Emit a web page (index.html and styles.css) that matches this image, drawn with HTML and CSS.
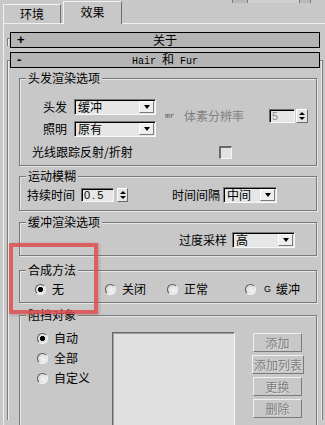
FILE: index.html
```html
<!DOCTYPE html>
<html lang="zh">
<head>
    <meta charset="UTF-8">
    <title>环境和效果</title>
    <link rel="stylesheet" href="styles.css">
</head>
<body>
    <div class="tabs">
        <div class="tab">环境</div>
        <div class="tab active">效果</div>
        <div class="top-bits"><span></span><span></span><span></span></div>
    </div>

    <div class="panel">
        <div class="rollout">
            <div class="bracket short"></div>
            <div class="bar"><span class="sign">+</span><span class="bar-title">关于</span></div>
        </div>

        <div class="rollout open">
            <div class="bracket long"></div>
            <div class="rollout-body">
                <div class="bar"><span class="sign">-</span><span class="bar-title mono">Hair <span class="cjk">和</span> Fur</span></div>

                <div class="group g-hair">
                    <div class="group-title">头发渲染选项</div>
                    <div class="hair-top">
                        <div class="hair-left">
                            <div class="field-row">
                                <span class="lbl">头发</span>
                                <div class="combo w-hair"><span class="combo-text">缓冲</span><span class="drop"></span></div>
                            </div>
                            <div class="field-row">
                                <span class="lbl">照明</span>
                                <div class="combo w-hair"><span class="combo-text">原有</span><span class="drop"></span></div>
                            </div>
                        </div>
                        <div class="voxel">
                            <span class="mr">mr</span>
                            <span class="dim">体素分辨率</span>
                            <div class="spinner">
                                <span class="spin-field w-voxel dim-num">5</span>
                                <span class="spin-arrows"><i class="up"></i><i class="down"></i></span>
                            </div>
                        </div>
                    </div>
                    <div class="ray-row">
                        <span>光线跟踪反射/折射</span>
                        <span class="check"></span>
                    </div>
                </div>

                <div class="group g-motion">
                    <div class="group-title">运动模糊</div>
                    <div class="row">
                        <span class="motion-lbl">持续时间</span>
                        <div class="spinner">
                            <span class="spin-field w-dur">0.5</span>
                            <span class="spin-arrows gap"><i class="up"></i><i class="down"></i></span>
                        </div>
                        <span class="interval-lbl">时间间隔</span>
                        <div class="combo w-interval"><span class="combo-text">中间</span><span class="drop"></span></div>
                    </div>
                </div>

                <div class="group g-buffer">
                    <div class="group-title">缓冲渲染选项</div>
                    <div class="row">
                        <span class="over-lbl">过度采样</span>
                        <div class="combo w-over"><span class="combo-text">高</span><span class="drop"></span></div>
                    </div>
                </div>

                <div class="group g-comp">
                    <div class="group-title">合成方法</div>
                    <div class="radio-row">
                        <label class="radio-item"><span class="radio on"></span>无</label>
                        <label class="radio-item"><span class="radio"></span>关闭</label>
                        <label class="radio-item"><span class="radio"></span>正常</label>
                        <label class="radio-item"><span class="radio"></span><span class="g">G</span>缓冲</label>
                    </div>
                </div>

                <div class="group g-occl">
                    <div class="group-title">阻挡对象</div>
                    <div class="occl-body">
                        <div class="radio-col">
                            <label class="radio-item"><span class="radio on"></span>自动</label>
                            <label class="radio-item"><span class="radio"></span>全部</label>
                            <label class="radio-item"><span class="radio"></span>自定义</label>
                        </div>
                        <div class="list-box"></div>
                        <div class="btn-col">
                            <button class="btn w-btn" disabled>添加</button>
                            <button class="btn" disabled>添加列表</button>
                            <button class="btn w-btn" disabled>更换</button>
                            <button class="btn w-btn" disabled>删除</button>
                        </div>
                    </div>
                </div>
            </div>
            <div class="bracket long right"></div>
        </div>
    </div>

    <div class="highlight"></div>
</body>
</html>
```

FILE: styles.css
```css
* {
    margin: 0;
    padding: 0;
    box-sizing: border-box;
}

body {
    width: 325px;
    height: 425px;
    overflow: hidden;
    position: relative;
    background: #c8c8c8;
    font-family: "Noto Sans CJK SC", "Liberation Sans", sans-serif;
    font-size: 12px;
    line-height: 14px;
    color: #000;
}

/* tabs */
.tabs {
    display: flex;
    align-items: flex-end;
    height: 23px;
    padding-left: 3px;
    gap: 2px;
}

.tab {
    width: 58px;
    height: 19px;
    display: flex;
    align-items: center;
    justify-content: center;
    border: 1px solid #f2f2f2;
    border-right-color: #6e6e6e;
    border-bottom: none;
    background: #c8c8c8;
}

.tab.active {
    width: 59px;
    height: 23px;
    margin-bottom: -1px;
    padding-bottom: 2px;
    position: relative;
    z-index: 1;
}

.top-bits {
    display: flex;
    align-self: flex-start;
    margin-left: 108px;
    height: 3px;
}

.top-bits span {
    height: 3px;
    border-left: 1px solid #7a7a7a;
    background: #b8b8b8;
}

.top-bits span:nth-child(1) { width: 15px; }
.top-bits span:nth-child(2) { width: 52px; background: #d0d0d0; }
.top-bits span:nth-child(3) { width: 12px; border-right: 1px solid #7a7a7a; }

.panel {
    height: 402px;
    overflow: hidden;
    margin-left: 3px;
    padding-top: 8px;
    border-top: 1px solid #f0f0f0;
    border-left: 1px solid #f0f0f0;
}

/* rollouts */
.rollout {
    display: flex;
}

.rollout.open {
    margin-top: 4px;
}

.bracket {
    width: 3px;
    margin-left: 3px;
    border-left: 1px solid #7c7c7c;
    border-top: 1px solid #7c7c7c;
    box-shadow: inset 1px 1px 0 #ececec;
}

.bracket.short {
    height: 8px;
    margin-top: 6px;
}

.bracket.long {
    margin-top: 8px;
    height: 360px;
}

.bracket.right {
    margin-left: 0;
    border-left: none;
    border-right: 1px solid #7c7c7c;
    box-shadow: inset -1px 1px 0 #ececec;
}

.rollout-body {
    width: 310px;
}

.bar {
    width: 310px;
    height: 16px;
    border: 1px solid #000;
    background: #b4b4b4;
    display: flex;
    align-items: center;
}

.sign {
    width: 18px;
    padding-left: 6px;
    font-family: "Liberation Sans", sans-serif;
    font-weight: bold;
    font-size: 13px;
}

.bar-title {
    flex: 1;
    text-align: center;
    margin-right: 18px;
}

.bar-title.mono {
    font-family: "Liberation Mono", monospace;
    font-size: 10px;
    white-space: pre;
}

.bar-title .cjk {
    font-family: "Noto Sans CJK SC", sans-serif;
    font-size: 12px;
}

/* group boxes */
.group {
    width: 298px;
    margin-left: 9px;
    border: 1px solid #7a7a7a;
    box-shadow: 1px 1px 0 #e4e4e4, inset 1px 1px 0 #e4e4e4;
}

.group-title {
    width: fit-content;
    margin: -8px 0 0 6px;
    padding: 0 2px;
    background: #c8c8c8;
    line-height: 14px;
}

.g-hair { margin-top: 10px; padding-bottom: 6px; }
.g-motion { margin-top: 10px; padding-bottom: 7px; }
.g-buffer { margin-top: 11px; padding-bottom: 7px; }
.g-comp { margin-top: 14px; padding-bottom: 6px; }
.g-occl { margin-top: 12px; height: 112px; }

.row {
    display: flex;
    align-items: center;
}

/* hair group */
.hair-top {
    display: flex;
    margin-top: 14px;
}

.hair-left {
    display: flex;
    flex-direction: column;
    gap: 6px;
}

.field-row {
    display: flex;
    align-items: center;
}

.lbl {
    width: 47px;
    text-align: right;
    margin-right: 7px;
}

.voxel {
    display: flex;
    align-items: center;
    margin: 10px 0 0 9px;
    height: 14px;
}

.mr {
    font-family: "Liberation Mono", monospace;
    font-size: 8px;
    color: #555;
    width: 19px;
}

.dim {
    color: #808080;
    width: 85px;
}

.ray-row {
    display: flex;
    align-items: center;
    height: 14px;
    margin: 8px 0 0 12px;
}

.ray-row span:first-child {
    width: 187px;
}

.check {
    width: 13px;
    height: 13px;
    background: #e2e2e2;
    border-style: solid;
    border-width: 2px 1px 1px 2px;
    border-color: #6a6a6a #f6f6f6 #f6f6f6 #6a6a6a;
}

/* combos */
.combo {
    height: 16px;
    display: flex;
    align-items: center;
    justify-content: space-between;
    background: #e6e6e6;
    border: 1px solid;
    border-color: #7a7a7a #f8f8f8 #f8f8f8 #7a7a7a;
    box-shadow: inset 1px 1px 0 #000;
}

.combo-text {
    padding-left: 3px;
}

.drop {
    width: 15px;
    height: 12px;
    margin-right: 1px;
    background: #eeeeee;
    border: 1px solid;
    border-color: #ffffff #7a7a7a #7a7a7a #ffffff;
    display: flex;
    align-items: center;
    justify-content: center;
}

.drop::after {
    content: "";
    border-left: 3.5px solid transparent;
    border-right: 3.5px solid transparent;
    border-top: 4px solid #000;
}

.w-hair { width: 82px; }
.w-interval { width: 54px; }
.w-over { width: 63px; }

/* spinners */
.spinner {
    display: flex;
    align-items: center;
}

.spin-field {
    height: 14px;
    padding-left: 2px;
    background: #e6e6e6;
    border: 1px solid;
    border-color: #6a6a6a #f8f8f8 #f8f8f8 #6a6a6a;
    box-shadow: inset 1px 1px 0 #000;
    font-family: "Liberation Sans", sans-serif;
    font-size: 11px;
    line-height: 12px;
    letter-spacing: 2px;
}

.dim-num {
    color: #8a8a8a;
}

.w-voxel { width: 26px; }
.w-dur { width: 33px; }

.spin-arrows {
    width: 12px;
    height: 14px;
    margin-left: 1px;
    display: flex;
    flex-direction: column;
    align-items: center;
    justify-content: center;
    gap: 2px;
    background: #e4e4e4;
    border: 1px solid;
    border-color: #ffffff #6a6a6a #6a6a6a #ffffff;
}

.spin-arrows.gap {
    margin-left: 3px;
    width: 11px;
}

.spin-arrows i {
    display: block;
    border-left: 3px solid transparent;
    border-right: 3px solid transparent;
}

.spin-arrows .up { border-bottom: 3px solid #000; }
.spin-arrows .down { border-top: 3px solid #000; }

/* motion blur */
.g-motion .row { margin-top: 4px; }

.motion-lbl {
    margin-left: 7px;
    width: 54px;
}

.interval-lbl {
    margin-left: 44px;
    width: 51px;
}

/* buffer */
.g-buffer .row { margin-top: 3px; }

.over-lbl {
    margin-left: 159px;
    width: 53px;
}

/* radios */
.radio-item {
    display: flex;
    align-items: center;
    height: 14px;
}

.radio {
    width: 11px;
    height: 11px;
    margin-right: 6px;
    border-radius: 50%;
    border: 1px solid;
    border-color: #5a5a5a #f4f4f4 #f4f4f4 #5a5a5a;
    background: radial-gradient(circle at 60% 60%, #f4f4f4 0, #d8d8d8 80%);
}

.radio.on {
    background: radial-gradient(circle, #000 0, #000 2.3px, #e8e8e8 2.9px, #d8d8d8 80%);
}

.radio-row {
    display: grid;
    grid-template-columns: 70px 62px 78px auto;
    margin: 5px 0 0 15px;
}

.g {
    font-family: "Liberation Sans", sans-serif;
    font-size: 9px;
    margin: 0 5px 0 2px;
}

/* occlusion */
.occl-body {
    display: flex;
    align-items: flex-start;
    margin-top: 9px;
}

.radio-col {
    width: 92px;
    padding-left: 17px;
    display: flex;
    flex-direction: column;
    gap: 6px;
}

.list-box {
    width: 123px;
    height: 100px;
    margin-top: 1px;
    background: #e0e0e0;
    border: 1px solid;
    border-color: #6a6a6a #f4f4f4 #f4f4f4 #6a6a6a;
    box-shadow: inset 1px 1px 0 #a0a0a0;
}

.btn-col {
    margin: 2px 0 0 17px;
    display: flex;
    flex-direction: column;
    align-items: flex-start;
    gap: 3px;
}

.btn {
    height: 19px;
    padding: 0 1px;
    font-family: "Noto Sans CJK SC", sans-serif;
    font-size: 12px;
    line-height: 14px;
    color: #7e7e7e;
    text-shadow: 1px 1px 0 #e0e0e0;
    background: #c8c8c8;
    border: 1px solid;
    border-color: #f0f0f0 #7a7a7a #7a7a7a #f0f0f0;
}

.w-btn {
    width: 49px;
    margin-left: 1px;
}

/* red highlight drawn over the panel */
.highlight {
    position: absolute;
    left: 9px;
    top: 243px;
    width: 89px;
    height: 71px;
    border: 4px solid rgba(222, 78, 80, 0.85);
    box-shadow: 1px 1px 3px rgba(120, 40, 40, 0.3);
}
```
